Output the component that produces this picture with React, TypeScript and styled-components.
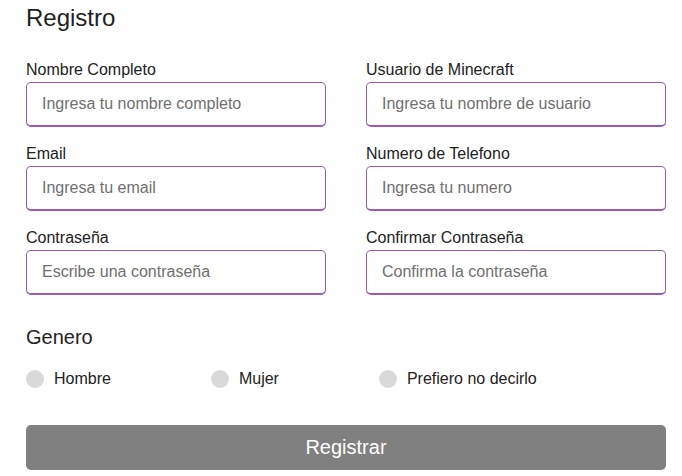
import { FC } from "react";
import styled, { createGlobalStyle } from "styled-components";

const GlobalStyle = createGlobalStyle`
  body {
    margin: 0;
    background: #fff;
    font-family: "Liberation Sans", Arial, sans-serif;
  }
`;

const Page = styled.form`
  width: 640px;
  padding: 4px 0 0 26px;
`;

const Title = styled.h2`
  margin: 0 0 29px;
  font-size: 24px;
  font-weight: 400;
  line-height: 28px;
  color: #222;
`;

const FieldGrid = styled.div`
  display: grid;
  grid-template-columns: 300px 300px;
  column-gap: 40px;
  row-gap: 18px;
`;

const Field = styled.label`
  display: flex;
  flex-direction: column;
  gap: 3px;
`;

const LabelText = styled.span`
  font-size: 16px;
  line-height: 18px;
  color: #222;
`;

const Input = styled.input`
  box-sizing: border-box;
  height: 45px;
  width: 100%;
  padding: 0 15px;
  border: 1px solid #9b59b6;
  border-bottom-width: 2px;
  border-radius: 5px;
  font-family: inherit;
  font-size: 16px;
  color: #222;
  outline: none;

  &::placeholder {
    color: #6f6f6f;
  }
`;

const GenderTitle = styled.div`
  margin: 31px 0 21px;
  font-size: 20px;
  line-height: 23px;
  color: #222;
`;

const RadioRow = styled.div`
  display: flex;
  align-items: center;
`;

const RadioOption = styled.label`
  display: flex;
  align-items: center;
  gap: 10px;
  margin-right: 100px;
  font-size: 16px;
  color: #222;
`;

const Dot = styled.span`
  width: 18px;
  height: 18px;
  border-radius: 50%;
  background: #d9d9d9;
`;

const SubmitButton = styled.button`
  display: block;
  box-sizing: border-box;
  width: 640px;
  height: 45px;
  margin-top: 37px;
  border: none;
  border-radius: 5px;
  background: #808080;
  color: #fff;
  font-family: inherit;
  font-size: 20px;
`;

const fields = [
  { label: "Nombre Completo", placeholder: "Ingresa tu nombre completo" },
  { label: "Usuario de Minecraft", placeholder: "Ingresa tu nombre de usuario" },
  { label: "Email", placeholder: "Ingresa tu email" },
  { label: "Numero de Telefono", placeholder: "Ingresa tu numero" },
  { label: "Contraseña", placeholder: "Escribe una contraseña" },
  { label: "Confirmar Contraseña", placeholder: "Confirma la contraseña" },
];

const genders = ["Hombre", "Mujer", "Prefiero no decirlo"];

const App: FC = () => (
  <>
    <GlobalStyle />
    <Page onSubmit={(e) => e.preventDefault()}>
      <Title>Registro</Title>
      <FieldGrid>
        {fields.map((f) => (
          <Field key={f.label}>
            <LabelText>{f.label}</LabelText>
            <Input placeholder={f.placeholder} />
          </Field>
        ))}
      </FieldGrid>
      <GenderTitle>Genero</GenderTitle>
      <RadioRow>
        {genders.map((g) => (
          <RadioOption key={g}>
            <Dot />
            {g}
          </RadioOption>
        ))}
      </RadioRow>
      <SubmitButton type="submit">Registrar</SubmitButton>
    </Page>
  </>
);

export default App;
